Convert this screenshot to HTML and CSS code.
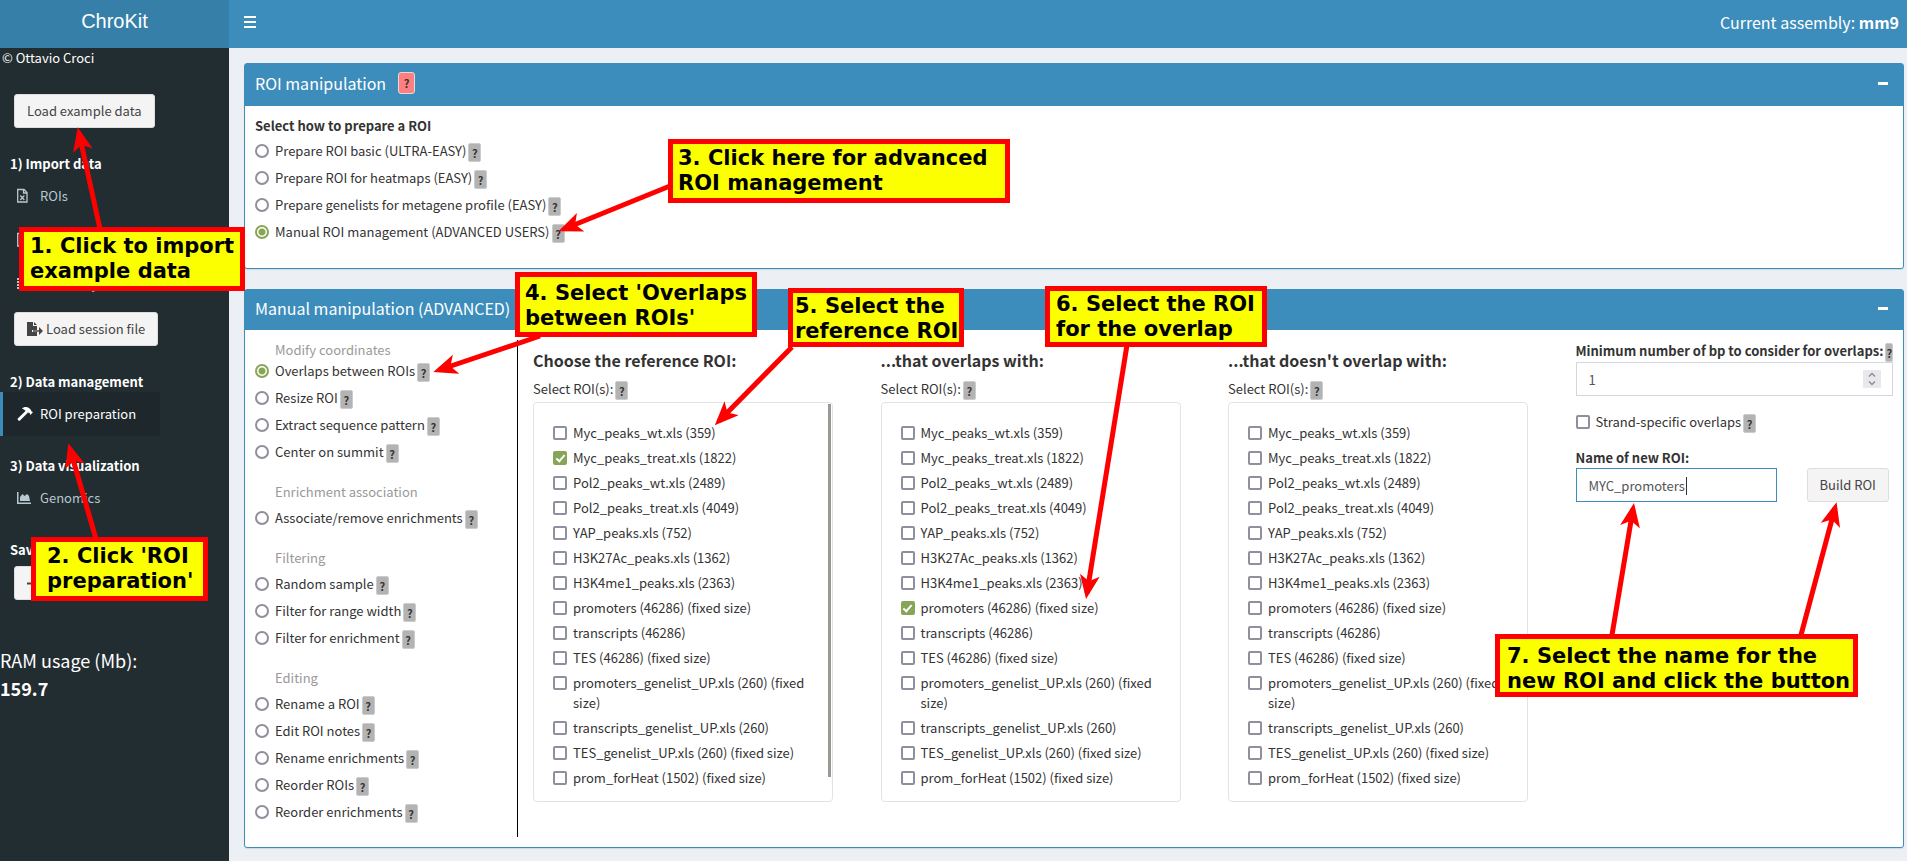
FILE: index.html
```html
<!DOCTYPE html>
<html lang="en">
<head>
<meta charset="utf-8">
<title>ChroKit</title>
<link rel="stylesheet" href="styles.css">
</head>
<body>
<div class="app">
  <header class="topbar">
    <a class="logo" href="#">ChroKit</a>
    <nav class="navbar">
      <button class="toggle" type="button" aria-label="Toggle navigation">
        <svg width="12" height="12" viewBox="0 0 12 12"><path d="M0 1h12M0 6h12M0 11h12" stroke="#fff" stroke-width="2"/></svg>
      </button>
      <span class="assembly">Current assembly: <b>mm9</b></span>
    </nav>
  </header>

  <aside class="sidebar">
    <p class="author">© Ottavio Croci</p>
    <button class="btn side-btn" type="button">Load example data</button>
    <h2 class="side-title">1) Import data</h2>
    <a class="side-link" href="#"><svg class="ico" width="16" height="16" viewBox="0 0 16 16"><path d="M.7 1.500h6.300l3 3v9.500H.7zM6.500 1.500v3.500H10M3.300 7.500l4 4.500M7.300 7.500l-4 4.500" fill="none" stroke="currentColor" stroke-width="1.300"/></svg>ROIs</a>
    <a class="side-link" href="#"><svg class="ico" width="16" height="16" viewBox="0 0 16 16"><path d="M.7 1.500h6.300l3 3v9.500H.7zM6.500 1.500v3.500H10" fill="none" stroke="currentColor" stroke-width="1.300"/></svg>Enrichments</a>
    <a class="side-link" href="#"><svg class="ico" width="16" height="16" viewBox="0 0 16 16"><path d="M0 3h3M4 3h10M0 6h3M4 6h10M0 9h3M4 9h10M0 12h3M4 12h10" stroke="currentColor" stroke-width="2"/></svg>Assembly</a>
    <button class="btn side-btn" type="button"><svg width="16" height="14" viewBox="0 0 16 14"><path fill="#444" d="M0 0h6v4h4v4H5v2h5v4H0zM7 0l3 3H7zM12 5l4 4-4 4v-3.200H6V8.200h6z"/></svg>Load session file</button>
    <h2 class="side-title">2) Data management</h2>
    <a class="side-link active" href="#"><svg class="ico" width="16" height="16" viewBox="0 0 16 16"><path fill="currentColor" d="M5 2.500C7 .5 10 .5 12 2l2 2 .5 1.500 1.500.500-2.500 3-1-2-1.500-.500L3 14.500c-1 1-3-.500-2.200-2L8.500 5C7.500 3.500 6.500 3 5 2.500z"/></svg>ROI preparation</a>
    <h2 class="side-title">3) Data visualization</h2>
    <a class="side-link" href="#"><svg class="ico" width="16" height="16" viewBox="0 0 16 16"><path fill="currentColor" d="M0 2h1.500v10.500H14V14H0zM3 11V7l2.500-3 2 2L10 4l2 2 1 5z"/></svg>Genomics</a>
    <h2 class="side-title">Save session</h2>
    <button class="btn side-btn save" type="button"><svg width="14" height="14" viewBox="0 0 14 14"><path fill="#444" d="M4 0h7l3 3v11H4V9h3v2l4-3.500L7 4v2.500H4zM0 6.500h4v2H0z"/></svg>Save session</button>
    <p class="ram">RAM usage (Mb):<br><b>159.7</b></p>
  </aside>

  <main class="content">
    <section class="box">
      <div class="box-head tall"><h3>ROI manipulation</h3><button class="help red" type="button">?</button><button class="collapse" type="button" aria-label="Collapse"></button></div>
      <div class="box-body first">
        <fieldset class="radios">
          <legend>Select how to prepare a ROI</legend>
          <div class="row"><label><input type="radio" name="prep">Prepare ROI basic (ULTRA-EASY)</label><button class="help" type="button">?</button></div>
          <div class="row"><label><input type="radio" name="prep">Prepare ROI for heatmaps (EASY)</label><button class="help" type="button">?</button></div>
          <div class="row"><label><input type="radio" name="prep">Prepare genelists for metagene profile (EASY)</label><button class="help" type="button">?</button></div>
          <div class="row"><label><input type="radio" name="prep" checked>Manual ROI management (ADVANCED USERS)</label><button class="help" type="button">?</button></div>
        </fieldset>
      </div>
    </section>

    <section class="box">
      <div class="box-head"><h3>Manual manipulation (ADVANCED)</h3><button class="collapse" type="button" aria-label="Collapse"></button></div>
      <div class="box-body manual">
        <div class="actions">
          <h4>Modify coordinates</h4>
          <div class="row"><label><input type="radio" name="act" checked>Overlaps between ROIs</label><button class="help" type="button">?</button></div>
          <div class="row"><label><input type="radio" name="act">Resize ROI</label><button class="help" type="button">?</button></div>
          <div class="row"><label><input type="radio" name="act">Extract sequence pattern</label><button class="help" type="button">?</button></div>
          <div class="row"><label><input type="radio" name="act">Center on summit</label><button class="help" type="button">?</button></div>
          <h4>Enrichment association</h4>
          <div class="row"><label><input type="radio" name="act">Associate/remove enrichments</label><button class="help" type="button">?</button></div>
          <h4>Filtering</h4>
          <div class="row"><label><input type="radio" name="act">Random sample</label><button class="help" type="button">?</button></div>
          <div class="row"><label><input type="radio" name="act">Filter for range width</label><button class="help" type="button">?</button></div>
          <div class="row"><label><input type="radio" name="act">Filter for enrichment</label><button class="help" type="button">?</button></div>
          <h4>Editing</h4>
          <div class="row"><label><input type="radio" name="act">Rename a ROI</label><button class="help" type="button">?</button></div>
          <div class="row"><label><input type="radio" name="act">Edit ROI notes</label><button class="help" type="button">?</button></div>
          <div class="row"><label><input type="radio" name="act">Rename enrichments</label><button class="help" type="button">?</button></div>
          <div class="row"><label><input type="radio" name="act">Reorder ROIs</label><button class="help" type="button">?</button></div>
          <div class="row"><label><input type="radio" name="act">Reorder enrichments</label><button class="help" type="button">?</button></div>
        </div>

        <div class="col">
          <h5>Choose the reference ROI:</h5>
          <div class="row pick">Select ROI(s):<button class="help" type="button">?</button></div>
          <div class="list scrolled">
            <label><input type="checkbox">Myc_peaks_wt.xls (359)</label>
            <label><input type="checkbox" checked>Myc_peaks_treat.xls (1822)</label>
            <label><input type="checkbox">Pol2_peaks_wt.xls (2489)</label>
            <label><input type="checkbox">Pol2_peaks_treat.xls (4049)</label>
            <label><input type="checkbox">YAP_peaks.xls (752)</label>
            <label><input type="checkbox">H3K27Ac_peaks.xls (1362)</label>
            <label><input type="checkbox">H3K4me1_peaks.xls (2363)</label>
            <label><input type="checkbox">promoters (46286) (fixed size)</label>
            <label><input type="checkbox">transcripts (46286)</label>
            <label><input type="checkbox">TES (46286) (fixed size)</label>
            <label><input type="checkbox">promoters_genelist_UP.xls (260) (fixed size)</label>
            <label><input type="checkbox">transcripts_genelist_UP.xls (260)</label>
            <label><input type="checkbox">TES_genelist_UP.xls (260) (fixed size)</label>
            <label><input type="checkbox">prom_forHeat (1502) (fixed size)</label>
          </div>
        </div>

        <div class="col">
          <h5>...that overlaps with:</h5>
          <div class="row pick">Select ROI(s):<button class="help" type="button">?</button></div>
          <div class="list">
            <label><input type="checkbox">Myc_peaks_wt.xls (359)</label>
            <label><input type="checkbox">Myc_peaks_treat.xls (1822)</label>
            <label><input type="checkbox">Pol2_peaks_wt.xls (2489)</label>
            <label><input type="checkbox">Pol2_peaks_treat.xls (4049)</label>
            <label><input type="checkbox">YAP_peaks.xls (752)</label>
            <label><input type="checkbox">H3K27Ac_peaks.xls (1362)</label>
            <label><input type="checkbox">H3K4me1_peaks.xls (2363)</label>
            <label><input type="checkbox" checked>promoters (46286) (fixed size)</label>
            <label><input type="checkbox">transcripts (46286)</label>
            <label><input type="checkbox">TES (46286) (fixed size)</label>
            <label><input type="checkbox">promoters_genelist_UP.xls (260) (fixed size)</label>
            <label><input type="checkbox">transcripts_genelist_UP.xls (260)</label>
            <label><input type="checkbox">TES_genelist_UP.xls (260) (fixed size)</label>
            <label><input type="checkbox">prom_forHeat (1502) (fixed size)</label>
          </div>
        </div>

        <div class="col">
          <h5>...that doesn't overlap with:</h5>
          <div class="row pick">Select ROI(s):<button class="help" type="button">?</button></div>
          <div class="list">
            <label><input type="checkbox">Myc_peaks_wt.xls (359)</label>
            <label><input type="checkbox">Myc_peaks_treat.xls (1822)</label>
            <label><input type="checkbox">Pol2_peaks_wt.xls (2489)</label>
            <label><input type="checkbox">Pol2_peaks_treat.xls (4049)</label>
            <label><input type="checkbox">YAP_peaks.xls (752)</label>
            <label><input type="checkbox">H3K27Ac_peaks.xls (1362)</label>
            <label><input type="checkbox">H3K4me1_peaks.xls (2363)</label>
            <label><input type="checkbox">promoters (46286) (fixed size)</label>
            <label><input type="checkbox">transcripts (46286)</label>
            <label><input type="checkbox">TES (46286) (fixed size)</label>
            <label><input type="checkbox">promoters_genelist_UP.xls (260) (fixed size)</label>
            <label><input type="checkbox">transcripts_genelist_UP.xls (260)</label>
            <label><input type="checkbox">TES_genelist_UP.xls (260) (fixed size)</label>
            <label><input type="checkbox">prom_forHeat (1502) (fixed size)</label>
          </div>
        </div>

        <div class="col options">
          <div class="row strong"><label for="minbp">Minimum number of bp to consider for overlaps:</label><button class="help" type="button">?</button></div>
          <div class="number">
            <input class="field" id="minbp" type="number" value="1">
            <svg class="spin" width="18" height="18" viewBox="0 0 18 18"><path d="M0 0h18v18H0z" fill="#e9e9ed"/><path d="M6 6.500l3-3 3 3M6 11.500l3 3 3-3" fill="none" stroke="#8f8f9d" stroke-width="1.500"/></svg>
          </div>
          <div class="row strand"><label><input type="checkbox">Strand-specific overlaps</label><button class="help" type="button">?</button></div>
          <label class="name-label" for="roiname">Name of new ROI:</label>
          <div class="build">
            <input class="field focus" id="roiname" type="text" value="MYC_promoters">
            <button class="btn" type="button">Build ROI</button>
          </div>
        </div>
      </div>
    </section>
  </main>

  <div class="notes">
    <svg class="arrows" width="1907" height="861" viewBox="0 0 1907 861">
      <defs><marker id="head" markerUnits="userSpaceOnUse" markerWidth="26" markerHeight="22" refX="18" refY="10" orient="auto"><path d="M24 10L0 0l6 10-6 10z" fill="#f00"/></marker></defs>
      <g stroke="#f00" stroke-width="5">
        <path d="M100 229L79 133" marker-end="url(#head)"/>
        <path d="M96 539L70 449" marker-end="url(#head)"/>
        <path d="M670 186L564 229" marker-end="url(#head)"/>
        <path d="M540 336L439 370" marker-end="url(#head)"/>
        <path d="M792 347L719 421" marker-end="url(#head)"/>
        <path d="M1127 345L1087 593" marker-end="url(#head)"/>
        <path d="M1612 635L1633 509" marker-end="url(#head)"/>
        <path d="M1801 635L1835 508" marker-end="url(#head)"/>
      </g>
    </svg>
    <p class="note n1">1. Click to import<br>example data</p>
    <p class="note n2">2. Click 'ROI<br>preparation'</p>
    <p class="note n3">3. Click here for advanced<br>ROI management</p>
    <p class="note n4">4. Select 'Overlaps<br>between ROIs'</p>
    <p class="note n5">5. Select the<br>reference ROI</p>
    <p class="note n6">6. Select the ROI<br>for the overlap</p>
    <p class="note n7">7. Select the name for the<br>new ROI and click the button</p>
  </div>
</div>
</body>
</html>
```
FILE: styles.css
```css
* { box-sizing: border-box; }
body, h2, h3, h4, h5, p, fieldset, legend { margin: 0; padding: 0; border: 0; }
body, button, input { font: 13px/20px "Noto Sans CJK SC", "Noto Sans", sans-serif; color: #333; }
body { background: #ecf0f5; }
button { cursor: pointer; padding: 0; border: 0; background: none; }

.app {
  position: relative;
  display: grid;
  grid-template: 48px 1fr / 229px 1fr;
  min-height: 100vh;
  overflow: hidden;
}
.topbar { grid-column: 1 / 3; display: flex; background: #3c8dbc; color: #fff; }
.logo {
  width: 229px;
  background: #367fa9;
  color: #fff;
  text-align: center;
  text-decoration: none;
  font: 20px/42px "Liberation Sans", Arial, sans-serif;
}
.navbar { flex: 1; display: flex; justify-content: space-between; align-items: center; padding: 0 8px 4px 15px; }
.toggle { display: flex; }
.assembly { font-size: 16px; }

.sidebar { background: #222d32; color: #fff; }
.author { padding: 0 2px; }
.btn {
  height: 34px;
  padding: 0 12px;
  border: 1px solid #ddd;
  border-radius: 3px;
  background: #f4f4f4;
  color: #444;
  white-space: nowrap;
}
.side-btn { display: flex; align-items: center; gap: 3px; margin: 26px 14px; }
.side-title { margin: 0 10px; font-size: 13px; line-height: 20px; }
.side-link {
  display: flex;
  align-items: center;
  gap: 7px;
  width: 160px;
  height: 44px;
  padding-left: 14px;
  border-left: 3px solid transparent;
  color: #b8c7ce;
  text-decoration: none;
}
.side-link + .side-title { margin-top: 20px; }
.side-link.active { border-left-color: #3c8dbc; background: #1e282c; color: #fff; }
.side-link + .side-btn { margin-top: 6px; }
.side-btn.save { margin: 6px 14px 46px; }
.ram { font-size: 18px; line-height: 28px; }

.content { padding: 15px 3px 12px 15px; }
.box {
  margin-bottom: 20px;
  border: 1px solid #3c8dbc;
  border-radius: 3px;
  background: #fff;
  box-shadow: 0 1px 1px rgba(0, 0, 0, .1);
}
.box:last-child { margin-bottom: 0; }
.box-head { display: flex; align-items: center; height: 40px; padding: 0 15px 4px 10px; background: #3c8dbc; color: #fff; }
.box-head.tall { height: 42px; }
.box-head h3 { font-size: 16px; font-weight: 400; line-height: 20px; }
.collapse { width: 10px; height: 3px; margin-left: auto; background: #fff; }
.box-body { padding: 10px; }
.box-body.first { padding-bottom: 22px; }

.help {
  width: 13px;
  height: 19px;
  border: 1px solid #ccc;
  border-radius: 2px;
  background: #b3b3b3;
  font-size: 11px;
  font-weight: 700;
  line-height: 18px;
}
.help.red { width: 17px; height: 22px; margin-left: 12px; border-color: #ddd; border-radius: 3px; background: #ff7f7f; }

.row { display: flex; align-items: center; gap: 2px; height: 27px; white-space: nowrap; }
.row .help { margin-top: 3px; }
.row label { display: flex; align-items: center; gap: 6px; }
legend { font-weight: 700; margin-bottom: 1px; }
.box-body.first { padding-bottom: 23px; }

input[type="radio"], input[type="checkbox"] {
  appearance: none;
  flex: none;
  width: 14px;
  height: 14px;
  margin: 0;
  border: 2px solid #8f8f9d;
  border-radius: 2px;
  background: #fff;
}
input[type="radio"] { border-radius: 50%; }
input[type="radio"]:checked { border-color: #87a556; background: radial-gradient(circle, #87a556 3px, #fff 4px); }
input[type="checkbox"]:checked { display: grid; place-items: center; border-color: #87a556; background: #87a556; }
input[type="checkbox"]:checked::before {
  content: "";
  width: 3px;
  height: 7px;
  margin-bottom: 2px;
  border: solid #fff;
  border-width: 0 2px 2px 0;
  transform: rotate(42deg);
}

.manual { display: grid; grid-template-columns: 8fr repeat(4, 10fr); margin: 0 -15px; }
.actions { padding: 3px 15px 11px; border-right: 1px solid #000; }
.actions h4 { margin: 20px 0 5px 20px; color: #999; font-size: 13px; font-weight: 400; line-height: 14px; }
.actions h4:first-child { margin: 0 0 0 20px; }
.col { min-width: 0; padding: 0 15px; }
.col h5 { margin-top: 10px; font-size: 16px; line-height: 20px; white-space: nowrap; }
.pick { margin-top: 5px; }
.list {
  display: flex;
  flex-direction: column;
  gap: 5px;
  max-width: 300px;
  margin-bottom: 35px;
  padding: 20px 19px 13px;
  border: 1px solid #e3e3e3;
  border-radius: 4px;
}
.list.scrolled { background: linear-gradient(#9c9995, #9c9995) no-repeat right 1px top 1px / 3px calc(100% - 25px); }
.list label { display: flex; gap: 6px; }
.list input { margin-top: 3px; }

.options .strong { height: 22px; font-weight: 700; }
.number { position: relative; }
.field {
  display: block;
  width: 100%;
  height: 34px;
  padding: 0 12px;
  border: 1px solid #d2d6de;
  outline: 0;
  background: #fff;
  color: #555;
  appearance: textfield;
}
.field::-webkit-inner-spin-button { appearance: none; margin: 0; }
.spin { position: absolute; top: 8px; right: 12px; }
.strand { margin-top: 12px; }
.name-label { display: block; margin-top: 13px; font-weight: 700; }
.build { display: flex; gap: 30px; }
.build .field { flex: 0 1 201px; min-width: 0; }
.field.focus {
  border-color: #3c8dbc;
  background: #fff linear-gradient(#333, #333) no-repeat 109px 8px / 1px 18px;
}

.notes { position: absolute; inset: 0; pointer-events: none; }
.arrows { display: block; }
.note {
  position: absolute;
  border: 5px solid #f00;
  background: #fcff00;
  color: #000;
  font: 700 21px/25px "DejaVu Sans", sans-serif;
  white-space: nowrap;
}
.n1 { left: 19px; top: 227px; width: 226px; height: 64px; padding: 2px 6px; }
.n2 { left: 31px; top: 537px; width: 177px; height: 64px; padding: 2px 11px; }
.n3 { left: 668px; top: 139px; width: 342px; height: 64px; padding: 2px 5px; }
.n4 { left: 515px; top: 272px; width: 242px; height: 65px; padding: 4px 5px; }
.n5 { left: 788px; top: 288px; width: 176px; height: 59px; padding: 1px 2px; }
.n6 { left: 1045px; top: 286px; width: 222px; height: 61px; padding: 1px 6px; }
.n7 { left: 1495px; top: 634px; width: 363px; height: 63px; padding: 5px 7px; }
```
